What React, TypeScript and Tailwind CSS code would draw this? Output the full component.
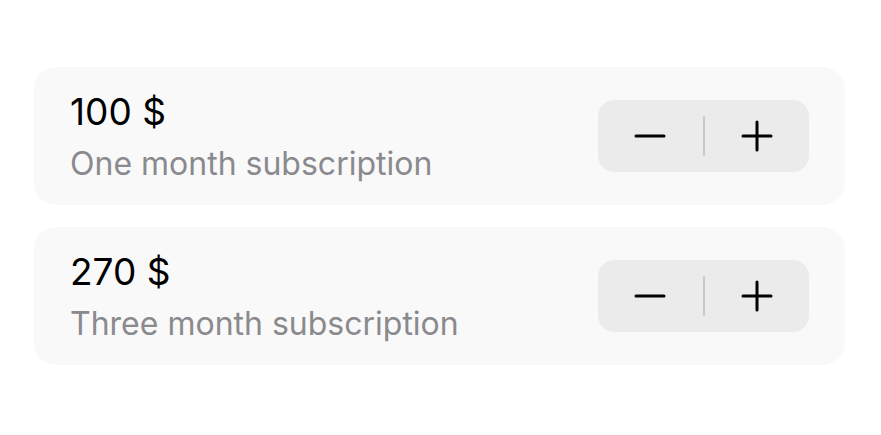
const plans = [
  { price: '100 $', label: 'One month subscription' },
  { price: '270 $', label: 'Three month subscription' },
];

const Stepper = () => (
  <div className="flex items-center w-[211px] h-[72px] rounded-[16px] bg-[#ebebeb]">
    <button className="flex items-center justify-center flex-1 h-full">
      <svg width="32" height="32" viewBox="0 0 32 32">
        <path d="M2 16h28" stroke="#000" strokeWidth="3" strokeLinecap="round" />
      </svg>
    </button>
    <div className="w-[2px] h-[40px] bg-[#c8c8c8] rounded-full" />
    <button className="flex items-center justify-center flex-1 h-full">
      <svg width="32" height="32" viewBox="0 0 32 32">
        <path d="M2 16h28M16 2v28" stroke="#000" strokeWidth="3" strokeLinecap="round" />
      </svg>
    </button>
  </div>
);

export default function App() {
  return (
    <div
      className="w-[881px] h-[435px] bg-white pl-[34px] pr-[36px] pt-[67px] flex flex-col gap-[22px]"
      style={{ fontFamily: 'Inter, "Noto Sans", sans-serif' }}
    >
      {plans.map((p) => (
        <div
          key={p.price}
          className="flex items-center justify-between h-[138px] rounded-[22px] bg-[#f9f9f9] pl-[36px] pr-[36px]"
        >
          <div className="flex flex-col pt-[3px]">
            <span className="text-[37px] leading-[40px] text-black">{p.price}</span>
            <span className="text-[32px] leading-[40px] mt-[12px] text-[#8a8a8e]">{p.label}</span>
          </div>
          <Stepper />
        </div>
      ))}
    </div>
  );
}
